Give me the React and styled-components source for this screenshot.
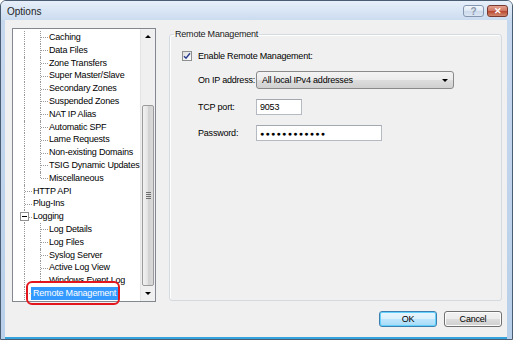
import React from 'react';
import styled, { createGlobalStyle } from 'styled-components';

const GlobalStyle = createGlobalStyle`
    html, body {
        margin: 0;
        padding: 0;
        background: #ffffff;
    }
    body {
        font-family: "Liberation Sans", Arial, sans-serif;
        font-size: 9px;
        letter-spacing: -0.2px;
        color: #000;
    }
`

const treeItems = [
    { label: 'Caching', depth: 1 },
    { label: 'Data Files', depth: 1 },
    { label: 'Zone Transfers', depth: 1 },
    { label: 'Super Master/Slave', depth: 1 },
    { label: 'Secondary Zones', depth: 1 },
    { label: 'Suspended Zones', depth: 1 },
    { label: 'NAT IP Alias', depth: 1 },
    { label: 'Automatic SPF', depth: 1 },
    { label: 'Lame Requests', depth: 1 },
    { label: 'Non-existing Domains', depth: 1 },
    { label: 'TSIG Dynamic Updates', depth: 1 },
    { label: 'Miscellaneous', depth: 1, last: true },
    { label: 'HTTP API', depth: 0 },
    { label: 'Plug-Ins', depth: 0 },
    { label: 'Logging', depth: 0, expanded: true },
    { label: 'Log Details', depth: 1 },
    { label: 'Log Files', depth: 1 },
    { label: 'Syslog Server', depth: 1 },
    { label: 'Active Log View', depth: 1 },
    { label: 'Windows Event Log', depth: 1, last: true },
    { label: 'Remote Management', depth: 0, selected: true },
]

const App = () => {
    return (
        <>
            <GlobalStyle />
            <Window>
                <TitleBar>
                    <Title>Options</Title>
                    <TitleButtons>
                        <CaptionButton>?</CaptionButton>
                        <CaptionButton close>✕</CaptionButton>
                    </TitleButtons>
                </TitleBar>

                <Body>
                    <Main>
                        <TreeWrap>
                            <TreeBox>
                                <TreeList>
                                    {
                                        treeItems.map(function(item, i) {
                                            return (
                                                <TreeRow key={i}>
                                                    {item.depth === 1 && <Guide />}
                                                    <Guide connector last={item.last}>
                                                        {item.expanded && <Expander />}
                                                    </Guide>
                                                    <TreeLabel selected={item.selected}>{item.label}</TreeLabel>
                                                </TreeRow>
                                            )
                                        })
                                    }
                                </TreeList>
                                <ScrollBar>
                                    <ScrollArrow><Triangle /></ScrollArrow>
                                    <ScrollTrack>
                                        <Thumb>
                                            <Grip />
                                        </Thumb>
                                    </ScrollTrack>
                                    <ScrollArrow><Triangle down /></ScrollArrow>
                                </ScrollBar>
                            </TreeBox>
                            <Callout />
                        </TreeWrap>

                        <GroupBox>
                            <Legend>Remote Management</Legend>
                            <CheckRow>
                                <CheckBox>
                                    <svg width="8" height="8" viewBox="0 0 8 8">
                                        <path d="M1 4.2 L3 6.3 L7 1.2" fill="none" stroke="#2a3f8f" strokeWidth="1.4" />
                                    </svg>
                                </CheckBox>
                                <span>Enable Remote Management:</span>
                            </CheckRow>
                            <Form>
                                <FieldLabel>On IP address:</FieldLabel>
                                <Select>
                                    <span>All local IPv4 addresses</span>
                                    <Triangle down wide />
                                </Select>
                                <FieldLabel>TCP port:</FieldLabel>
                                <TextInput width={46}>9053</TextInput>
                                <FieldLabel>Password:</FieldLabel>
                                <TextInput width={126}>
                                    <Dots>●●●●●●●●●●●●</Dots>
                                </TextInput>
                            </Form>
                        </GroupBox>
                    </Main>

                    <Footer>
                        <Button focused>OK</Button>
                        <Button>Cancel</Button>
                    </Footer>
                </Body>
            </Window>
        </>
    );
}

const Window = styled.div`
    width: 513px;
    height: 340px;
    box-sizing: border-box;
    display: flex;
    flex-direction: column;
    border: 1px solid #4a5d73;
    border-radius: 6px 6px 0 0;
    background: linear-gradient(to bottom, #dbe7f5 0, #c6d8ee 20px, #b9d0ea 100%);
    overflow: hidden;
`

const TitleBar = styled.div`
    height: 19px;
    display: flex;
    align-items: center;
    justify-content: space-between;
    padding: 0 4px 0 6px;
    background: linear-gradient(to bottom, #e7eff9, #cbdcf0);
`

const Title = styled.div`
    font-size: 10px;
    letter-spacing: 0;
    color: #1e1e1e;
    margin-top: 1px;
`

const TitleButtons = styled.div`
    display: flex;
    gap: 3px;
    margin-top: 1px;
`

const CaptionButton = styled.div`
    width: 21px;
    height: 12px;
    box-sizing: border-box;
    display: flex;
    align-items: center;
    justify-content: center;
    border-radius: 3px;
    font-size: ${p => p.close ? '9px' : '10px'};
    font-weight: bold;
    color: ${p => p.close ? '#ffffff' : '#8a98aa'};
    border: 1px solid ${p => p.close ? '#7b3a30' : '#8597b0'};
    background: ${p => p.close
        ? 'linear-gradient(to bottom, #e3a08f 0, #cf7763 50%, #b9452f 51%, #d08a6f 100%)'
        : 'linear-gradient(to bottom, #f3f7fc 0, #dde7f3 50%, #cbd9ea 51%, #dbe6f3 100%)'};
`

const Body = styled.div`
    flex: 1;
    display: flex;
    flex-direction: column;
    background: #f0f0f0;
    margin: 0 5px 0 4px;
    padding: 8px 5px 10px 7px;
    border-bottom: 2px solid #35a3db;
`

const Main = styled.div`
    flex: 1;
    display: flex;
    gap: 13px;
`

const TreeWrap = styled.div`
    position: relative;
    width: 144px;
    height: 274px;
`

const TreeBox = styled.div`
    height: 100%;
    box-sizing: border-box;
    display: flex;
    border: 1px solid #828790;
    background: #ffffff;
`

const TreeList = styled.div`
    flex: 1;
    padding: 2px 0 0 3px;
    overflow: hidden;
`

const TreeRow = styled.div`
    display: flex;
    align-items: center;
    height: 12.8px;
    white-space: nowrap;
`

const Guide = styled.span`
    position: relative;
    flex: none;
    width: 16px;
    height: 100%;

    &::before {
        content: '';
        position: absolute;
        left: 8px;
        top: 0;
        height: ${p => p.last ? '50%' : '100%'};
        border-left: 1px dotted #9a9a9a;
    }

    &::after {
        content: '';
        display: ${p => p.connector ? 'block' : 'none'};
        position: absolute;
        left: 9px;
        top: 50%;
        width: 7px;
        border-top: 1px dotted #9a9a9a;
    }
`

const Expander = styled.span`
    position: absolute;
    z-index: 1;
    left: 4px;
    top: 2px;
    width: 9px;
    height: 9px;
    box-sizing: border-box;
    border: 1px solid #919191;
    background: #ffffff;

    &::before {
        content: '';
        position: absolute;
        left: 1px;
        right: 1px;
        top: 3px;
        border-top: 1px solid #000;
    }
`

const TreeLabel = styled.span`
    margin-left: -1px;
    padding: 0 2px;
    line-height: 12.8px;
    color: ${p => p.selected ? '#ffffff' : '#000000'};
    background: ${p => p.selected ? '#3399ff' : 'transparent'};
`

const ScrollBar = styled.div`
    width: 14px;
    display: flex;
    flex-direction: column;
    background: #f0f0f0;
    border-left: 1px solid #e4e4e4;
`

const ScrollArrow = styled.div`
    height: 15px;
    display: flex;
    align-items: center;
    justify-content: center;
`

const Triangle = styled.span`
    width: 0;
    height: 0;
    border-left: ${p => p.wide ? 3.5 : 3}px solid transparent;
    border-right: ${p => p.wide ? 3.5 : 3}px solid transparent;
    ${p => p.down ? 'border-top: 3px solid #000;' : 'border-bottom: 3px solid #000;'}
`

const ScrollTrack = styled.div`
    flex: 1;
    display: flex;
    flex-direction: column;
    justify-content: flex-end;
`

const Thumb = styled.div`
    height: 181px;
    margin: 0 1px;
    box-sizing: border-box;
    display: flex;
    align-items: center;
    justify-content: center;
    border: 1px solid #9b9b9b;
    border-radius: 2px;
    background: linear-gradient(to right, #f2f2f2 0, #e4e4e4 45%, #d2d2d2 55%, #dadada 100%);
`

const Grip = styled.span`
    width: 5px;
    height: 7px;
    background: repeating-linear-gradient(to bottom, #6f6f6f 0, #6f6f6f 1px, transparent 1px, transparent 2px);
`

const Callout = styled.div`
    position: absolute;
    left: 14px;
    top: 253px;
    width: 94px;
    height: 24px;
    box-sizing: border-box;
    border: 2px solid #e2161c;
    border-radius: 6px;
    pointer-events: none;
`

const GroupBox = styled.fieldset`
    flex: 1;
    margin: 0;
    height: 273px;
    box-sizing: border-box;
    padding: 0 12px;
    border: 1px solid #d3dbe1;
    border-radius: 3px;
    box-shadow: inset 1px 1px 0 #ffffff;
`

const Legend = styled.legend`
    margin-left: -8px;
    padding: 0 1px;
    line-height: 12px;
    color: #1a1a1a;
`

const CheckRow = styled.div`
    display: flex;
    align-items: center;
    gap: 6px;
    margin-top: 11px;
    height: 10px;
`

const CheckBox = styled.span`
    width: 10px;
    height: 10px;
    box-sizing: border-box;
    display: flex;
    align-items: center;
    justify-content: center;
    border: 1px solid #8e8f8f;
    background: linear-gradient(135deg, #dcdcdc, #ffffff);
`

const Form = styled.div`
    display: grid;
    grid-template-columns: 58px auto;
    grid-template-rows: 18px 16px 16px;
    row-gap: 10px;
    align-items: center;
    justify-items: start;
    margin: 10px 0 0 16px;
`

const FieldLabel = styled.span`
    color: #000;
`

const Select = styled.div`
    width: 198px;
    height: 18px;
    box-sizing: border-box;
    display: flex;
    align-items: center;
    justify-content: space-between;
    padding: 0 5px 0 5px;
    border: 1px solid #8a8a8a;
    border-radius: 3px;
    background: linear-gradient(to bottom, #f3f3f3 0, #ebebeb 50%, #dddddd 51%, #d0d0d0 100%);
`

const TextInput = styled.div`
    width: ${p => p.width}px;
    height: 16px;
    box-sizing: border-box;
    display: flex;
    align-items: center;
    padding: 0 3px;
    border: 1px solid #b5b9c1;
    border-top-color: #a3a7af;
    background: #ffffff;
`

const Dots = styled.span`
    font-size: 7px;
    letter-spacing: 1.3px;
`

const Footer = styled.div`
    display: flex;
    justify-content: flex-end;
    gap: 7px;
    padding-top: 9px;
`

const Button = styled.div`
    width: 58px;
    height: 16px;
    box-sizing: border-box;
    display: flex;
    align-items: center;
    justify-content: center;
    border: 1px solid ${p => p.focused ? '#3c7fb1' : '#707070'};
    border-radius: 3px;
    background: ${p => p.focused
        ? 'linear-gradient(to bottom, #eaf6fd 0, #d9f0fc 50%, #bee6fd 51%, #a7d9f5 100%)'
        : 'linear-gradient(to bottom, #f2f2f2 0, #ebebeb 50%, #dddddd 51%, #cfcfcf 100%)'};
    box-shadow: inset 0 0 0 1px ${p => p.focused ? '#61d2fb' : '#fcfcfc'};
`

export default App;
